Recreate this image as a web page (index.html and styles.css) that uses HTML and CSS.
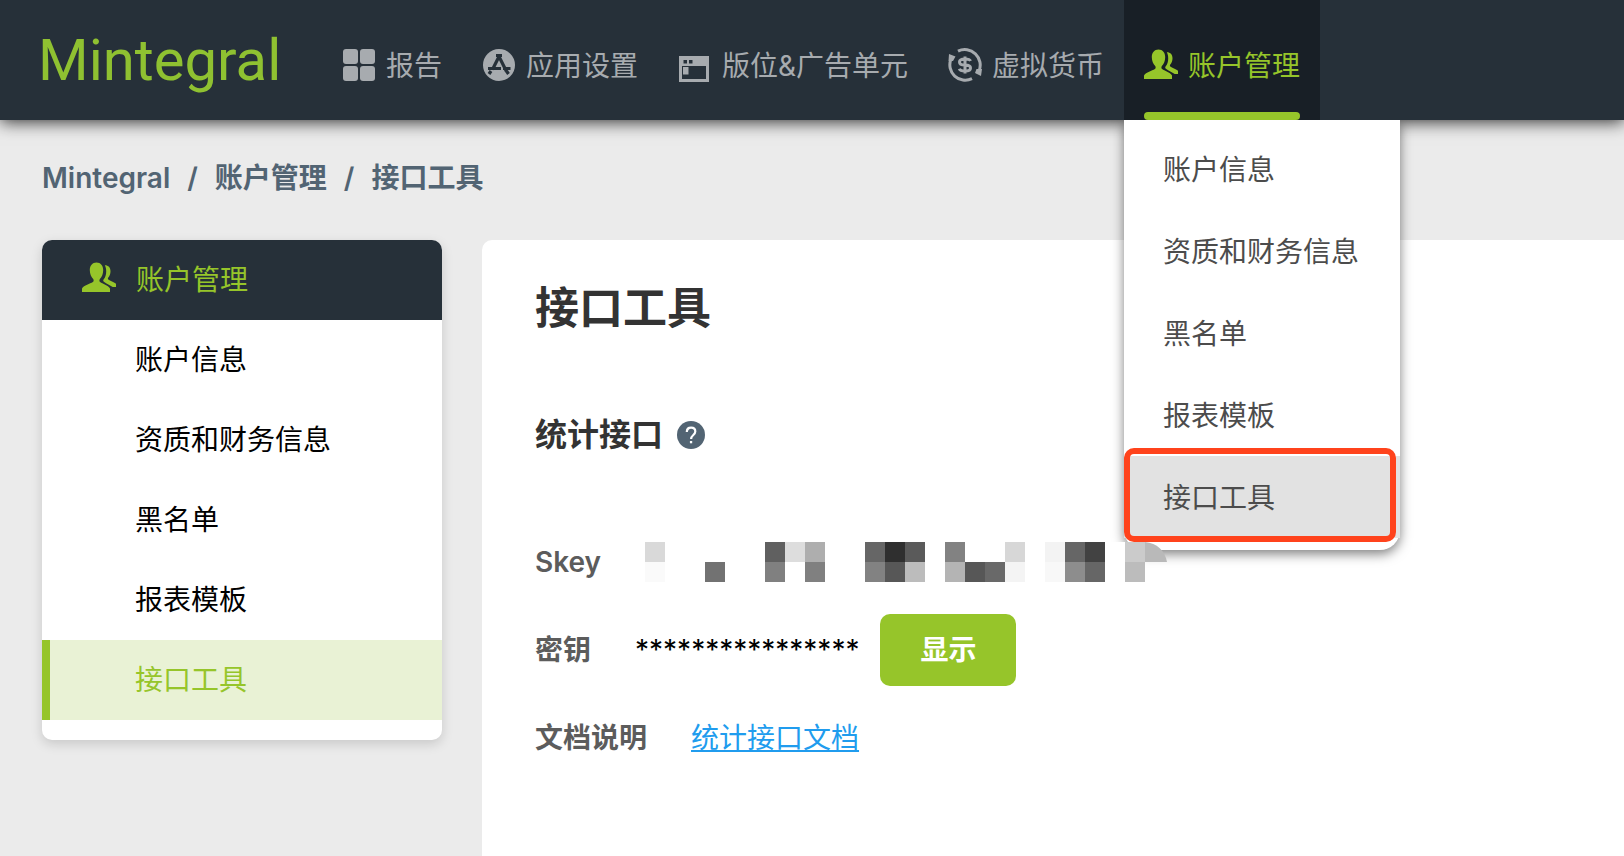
FILE: index.html
```html
<!DOCTYPE html>
<html lang="zh-CN">
<head>
<meta charset="utf-8">
<meta name="viewport" content="width=device-width, initial-scale=1">
<title>Mintegral - 接口工具</title>
<link rel="stylesheet" href="styles.css">
</head>
<body>
<svg class="sprite" aria-hidden="true">
  <symbol id="icon-users" viewBox="0 0 34 34">
    <path d="M14.500 1.500c-4.200 0-6.700 3.200-6.700 7.500 0 3.900 1.400 7 3.400 8.900.7.700.6 2.600-.3 3.200C8 23 2 24.300 0 27.500V31h28v-3.500c-2-3.200-7.500-4.500-9.900-6.400-.9-.6-.9-2.500-.2-3.200 2-1.900 3.300-5 3.300-8.900 0-4.300-2.500-7.500-6.700-7.500z"/>
    <path d="M22.800 4.200c3.700 0 5.700 2.300 5.700 6 0 2.600-.8 4.800-2.200 6.300-.6.700-.5 1.700.3 2.300 2.200 1.500 5.900 2.600 7.400 4V26h-3.300c-2.800-1.700-6-3-8.800-5.200-.9-.7-.9-1.800-.2-2.600 1.700-2 2.500-4.500 2.500-8 0-2.200-.5-4.300-1.400-6z"/>
  </symbol>
</svg>

<header class="topbar">
  <a class="logo" href="#">Mintegral</a>
  <nav class="nav">
    <a class="nav-item" href="#">
      <svg class="icon" viewBox="0 0 34 34" aria-hidden="true"><g fill="currentColor"><rect x="1" y="1" width="15" height="15" rx="3"/><rect x="18" y="1" width="15" height="15" rx="3"/><rect x="1" y="18" width="15" height="15" rx="3"/><rect x="18" y="18" width="15" height="15" rx="3"/></g></svg>
      <span>报告</span>
    </a>
    <a class="nav-item" href="#">
      <svg class="icon" viewBox="0 0 34 34" aria-hidden="true"><circle cx="17" cy="17" r="16" fill="currentColor"/><g fill="none" stroke="#263039" stroke-width="3.200"><path d="M14 7.500h6M17 8.500l-6.500 13M17 8.500l7.500 15M6 20.500h8M14 20.500h5M21 20.500h7.500"/><path d="M9 23l-2 3M24.500 23l2 3"/></g></svg>
      <span>应用设置</span>
    </a>
    <a class="nav-item" href="#">
      <svg class="icon" viewBox="0 0 34 34" aria-hidden="true"><path fill="currentColor" fill-rule="evenodd" d="M1 8h30v26H1zM4 18v13h24V18zM5.500 12v3.500h3.500V12zM11 12v3.500h3.500V12z"/><path fill="currentColor" d="M5 19h5.500v7.500H5z"/></svg>
      <span>版位&amp;广告单元</span>
    </a>
    <a class="nav-item" href="#">
      <svg class="icon" viewBox="0 0 34 34" aria-hidden="true"><g fill="none" stroke="currentColor"><path stroke-width="3" d="M10 3.200A15.400 15.400 0 0 1 31 23M24 30.700A15.400 15.400 0 0 1 3 11"/><path stroke-width="3" d="M22.500 13c-.7-1.700-2.700-2-5.500-2s-5.500.4-5.500 3 2.300 3 5.500 3 5.500.5 5.500 3-2.300 3-5.500 3-5-.5-5.700-2.300M17 8.500v17"/></g><path fill="currentColor" d="M1 6l6.500 2.500L5 13H.5zM33 28l-6-3 1.500-4H34z"/></svg>
      <span>虚拟货币</span>
    </a>
    <div class="nav-group">
      <a class="nav-item nav-item-active" href="#">
        <svg class="icon" aria-hidden="true"><use href="#icon-users" fill="currentColor"/></svg>
        <span>账户管理</span>
      </a>
      <div class="dropdown">
        <a class="dropdown-item" href="#">账户信息</a>
        <a class="dropdown-item" href="#">资质和财务信息</a>
        <a class="dropdown-item" href="#">黑名单</a>
        <a class="dropdown-item" href="#">报表模板</a>
        <a class="dropdown-item dropdown-item-active" href="#">接口工具</a>
      </div>
    </div>
  </nav>
</header>

<nav class="breadcrumb" aria-label="breadcrumb">
  <a href="#">Mintegral</a><span>/</span><a href="#">账户管理</a><span>/</span><a href="#">接口工具</a>
</nav>

<div class="layout">
  <aside class="sidebar">
    <div class="sidebar-head">
      <svg class="icon" aria-hidden="true"><use href="#icon-users" fill="currentColor"/></svg>
      <span>账户管理</span>
    </div>
    <a class="sidebar-item" href="#">账户信息</a>
    <a class="sidebar-item" href="#">资质和财务信息</a>
    <a class="sidebar-item" href="#">黑名单</a>
    <a class="sidebar-item" href="#">报表模板</a>
    <a class="sidebar-item sidebar-item-active" href="#">接口工具</a>
  </aside>

  <main class="panel">
    <h1 class="title">接口工具</h1>
    <h2 class="subtitle">统计接口
      <svg class="help" viewBox="0 0 28 28" role="img" aria-label="帮助"><circle cx="14" cy="14" r="14" fill="#526473"/><path fill="none" stroke="#fff" stroke-width="2.200" d="M9.800 11c0-2.600 1.700-4.300 4.300-4.300s4.200 1.600 4.200 3.900c0 3.400-4.200 3.400-4.200 7.400"/><path fill="#fff" d="M12.900 20h2.300v2.300h-2.300z"/></svg>
    </h2>
    <div class="field">
      <span class="label">Skey</span>
      <svg class="mask" viewBox="0 0 524 40" role="img" aria-label="已隐藏" shape-rendering="crispEdges">
        <path fill="#fff" d="M460 0h40v40h-40z"/>
        <path fill="#d9d9d9" d="M0 0h20v20H0z"/><path fill="#fafafa" d="M0 20h20v20H0z"/>
        <path fill="#727272" d="M60 20h20v20H60z"/>
        <path fill="#606060" d="M120 0h20v20h-20z"/><path fill="#808080" d="M120 20h20v20h-20zM160 20h20v20h-20z"/>
        <path fill="#dddddd" d="M140 0h20v20h-20z"/><path fill="#aeaeae" d="M160 0h20v20h-20z"/>
        <path fill="#666666" d="M220 0h20v20h-20zM420 0h20v20h-20zM440 20h20v20h-20z"/><path fill="#828282" d="M220 20h20v20h-20zM300 0h20v20h-20z"/>
        <path fill="#2f2f2f" d="M240 0h20v20h-20z"/><path fill="#575757" d="M240 20h20v20h-20zM320 20h20v20h-20z"/>
        <path fill="#5a5a5a" d="M260 0h20v20h-20z"/><path fill="#bcbcbc" d="M260 20h20v20h-20zM480 20h20v20h-20z"/>
        <path fill="#b4b4b4" d="M300 20h20v20h-20z"/><path fill="#696969" d="M340 20h20v20h-20z"/>
        <path fill="#d7d7d7" d="M360 0h20v20h-20z"/><path fill="#f4f4f4" d="M360 20h20v20h-20z"/>
        <path fill="#f3f3f3" d="M400 0h20v20h-20z"/><path fill="#f8f8f8" d="M400 20h20v20h-20z"/>
        <path fill="#8d8d8d" d="M420 20h20v20h-20z"/><path fill="#424242" d="M440 0h20v20h-20z"/>
        <path fill="#cbcbcb" d="M480 0h20v20h-20z"/><path fill="#b9b9b9" shape-rendering="auto" d="M500 0c12 1 20 9 22 20h-22z"/>
      </svg>
    </div>
    <div class="field">
      <span class="label">密钥</span>
      <span class="secret">****************</span>
      <button class="button" type="button">显示</button>
    </div>
    <div class="field">
      <span class="label">文档说明</span>
      <a class="doc-link" href="#">统计接口文档</a>
    </div>
  </main>
</div>
</body>
</html>
```

FILE: styles.css
```css
* {
  box-sizing: border-box;
}

body {
  display: flex;
  flex-direction: column;
  min-height: 100vh;
  margin: 0;
  background: #ebebeb;
  color: #000;
  font: 28px/40px Inter, "Noto Sans CJK SC", sans-serif;
}

a {
  color: inherit;
  text-decoration: none;
}

.sprite {
  display: none;
}

.icon {
  flex: none;
  width: 34px;
  height: 34px;
}

.topbar {
  position: relative;
  z-index: 1;
  display: flex;
  height: 120px;
  padding-left: 38px;
  background: #263039;
  box-shadow: 0 2px 16px rgba(0, 0, 0, 0.8);
}

.logo {
  align-self: center;
  width: 244px;
  margin-right: 40px;
  color: #8fc131;
  font: 400 58px/80px Roboto, sans-serif;
}

.nav {
  display: flex;
}

.nav-group {
  position: relative;
}

.nav-item {
  display: flex;
  align-items: center;
  gap: 10px;
  height: 120px;
  padding: 12px 20px 0;
  color: #a7abaf;
  white-space: nowrap;
}

.nav-item .icon {
  margin-bottom: 2px;
}

.nav-item-active {
  background: #181f26;
  color: #96c52a;
}

.nav-item-active::after {
  content: "";
  position: absolute;
  right: 20px;
  bottom: 0;
  left: 20px;
  height: 8px;
  border-radius: 4px;
  background: #96c52a;
}

.dropdown {
  position: absolute;
  top: 120px;
  left: 0;
  width: 276px;
  padding: 8px 0 12px;
  border-radius: 0 0 20px 20px;
  background: #fff;
  box-shadow: 0 4px 12px rgba(0, 0, 0, 0.5);
  clip-path: inset(0 -20px -24px -20px);
}

.dropdown-item {
  display: block;
  height: 82px;
  padding: 2px 39px 0;
  color: #4c4c4c;
  line-height: 80px;
}

.dropdown-item-active {
  position: relative;
  background: #e2e2e2;
}

.dropdown-item-active::after {
  content: "";
  position: absolute;
  inset: -8px 4px -4px 0;
  border: 6px solid #ff431c;
  border-radius: 10px;
}

.breadcrumb {
  display: flex;
  gap: 17px;
  padding: 38px 42px 42px;
  color: #526473;
  font-weight: 600;
}

.layout {
  display: flex;
  flex: 1;
  align-items: flex-start;
  gap: 40px;
  padding-left: 42px;
}

.sidebar {
  flex: none;
  width: 400px;
  padding-bottom: 20px;
  overflow: hidden;
  border-radius: 10px;
  background: #fff;
  box-shadow: 0 4px 12px rgba(0, 0, 0, 0.15);
}

.sidebar-head {
  display: flex;
  align-items: center;
  gap: 20px;
  height: 80px;
  padding-left: 40px;
  background: #263039;
  color: #96c52a;
}

.sidebar-head .icon {
  margin-bottom: 4px;
}

.sidebar-item {
  display: block;
  padding-left: 85px;
  border-left: 8px solid transparent;
  line-height: 80px;
}

.sidebar-item-active {
  border-left-color: #96c52a;
  background: #e9f2d5;
  color: #96c52a;
}

.panel {
  flex: 1;
  align-self: stretch;
  padding: 38px 53px;
  border-radius: 10px 0 0 0;
  background: #fff;
}

.title {
  margin: 0;
  color: #333;
  font-size: 44px;
  line-height: 60px;
}

.subtitle {
  display: flex;
  align-items: center;
  gap: 14px;
  margin: 77px 0 87px;
  color: #333;
  font-size: 32px;
  line-height: 40px;
}

.help {
  width: 28px;
  height: 28px;
}

.field {
  display: flex;
  align-items: center;
  margin-bottom: 32px;
}

.label {
  margin-right: 44px;
  color: #5c5c5c;
  font-weight: 600;
}

.mask {
  position: relative;
  z-index: 2;
  width: 524px;
  height: 40px;
}

.button {
  height: 72px;
  margin-left: 21px;
  padding: 0 40px;
  border: 0;
  border-radius: 10px;
  background: #96c52a;
  color: #fff;
  font: inherit;
  font-weight: 700;
}

.doc-link {
  color: #209cee;
  text-decoration: underline;
}
```
